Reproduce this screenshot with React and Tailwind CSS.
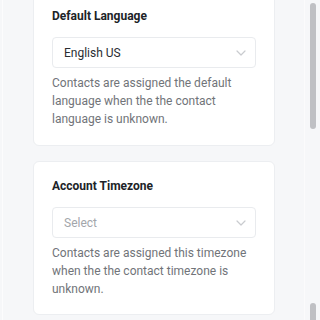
import React from "react";

function Chevron() {
  return (
    <svg width="10" height="6" viewBox="0 0 10 6" fill="none">
      <path d="M1 1l4 4 4-4" stroke="#c9cbcf" strokeWidth="1.2" strokeLinecap="round" strokeLinejoin="round" />
    </svg>
  );
}

function Card({ title, value, placeholder, desc, className }) {
  return (
    <div className={"bg-white rounded-[6px] border border-[#eceef1] px-[18px] " + className}>
      <div className="text-[12px] font-bold leading-5 text-[#202327]">{title}</div>
      <div className="mt-[11px] h-[31px] border border-[#e9ebee] rounded-[4px] pl-[11px] pr-[9px] flex items-center justify-between">
        <span className={"text-[12px] " + (placeholder ? "text-[#a3a6ab]" : "text-[#2a2d31]")}>{value}</span>
        <Chevron />
      </div>
      <p className="mt-[6px] text-[12px] leading-[18px] text-[#717479]">{desc}</p>
    </div>
  );
}

export default function App() {
  return (
    <div className="w-[320px] h-[320px] overflow-hidden bg-[#f6f7f9] flex relative" style={{ fontFamily: "Roboto, 'Noto Sans', sans-serif" }}>
      <div className="w-[3px] shrink-0 border-r border-[#fcfcfd]" />
      <div className="w-[302px] shrink-0 pl-[30px] pr-[29px] border-r border-[#fbfbfc]">
        <Card
          className="mt-[-10px] pt-[15px] pb-[17px]"
          title="Default Language"
          value="English US"
          desc="Contacts are assigned the default language when the the contact language is unknown."
        />
        <div className="h-[15px]" />
        <Card
          className="pt-[14px] pb-[16px]"
          title="Account Timezone"
          value="Select"
          placeholder
          desc="Contacts are assigned this timezone when the the contact timezone is unknown."
        />
      </div>
      <div className="flex-1 relative">
        <div className="absolute left-[5px] top-[3px] w-[6px] h-[126px] rounded-[3px] bg-[#bfc0c4]" />
        <div className="absolute left-[5px] top-[303px] w-[6px] h-[30px] rounded-[3px] bg-[#bfc0c4]" />
      </div>
    </div>
  );
}
